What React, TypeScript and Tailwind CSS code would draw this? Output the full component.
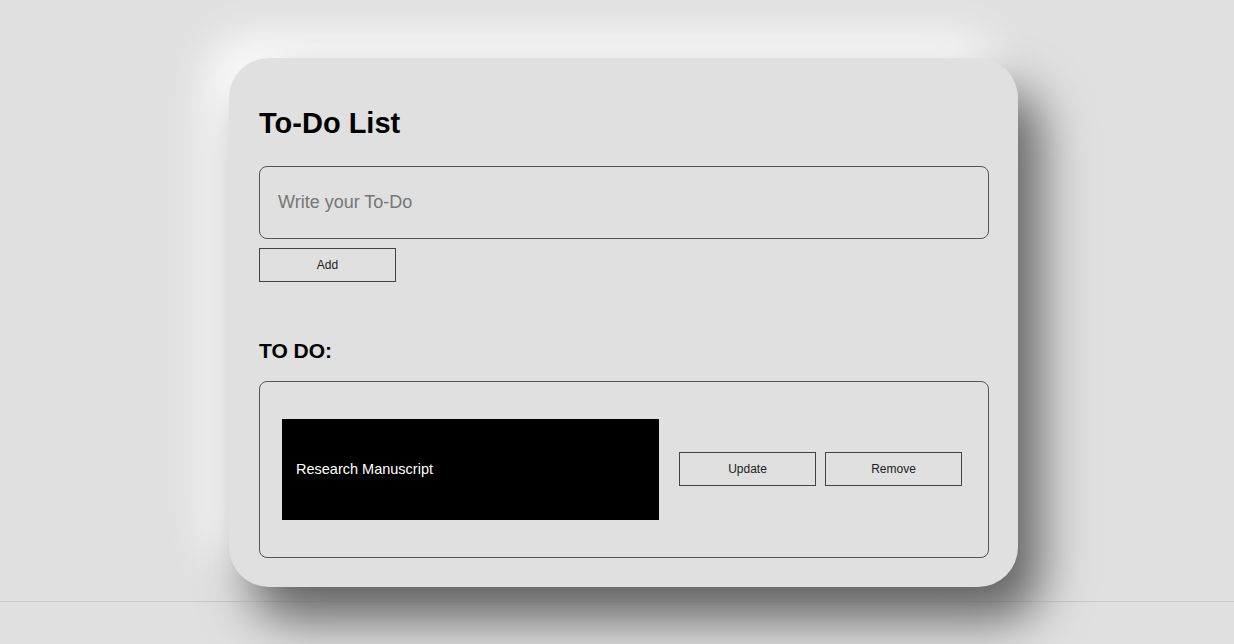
export default function App() {
  return (
    <div className="min-h-[644px] w-full overflow-hidden bg-[#e0e0e0] font-['Liberation_Sans',Arial,sans-serif]">
      <div className="h-[602px] border-b border-[#c9c9c9] pl-[229px] pt-[58px]">
        <div className="flex h-[529px] w-[789px] flex-col rounded-[40px] bg-[#e0e0e0] px-[30px] shadow-[22px_32px_50px_#626262,-20px_-20px_45px_#ffffff]">
          <h1 className="mt-[51px] text-[29px] font-bold leading-none text-black">To-Do List</h1>
          <input
            type="text"
            placeholder="Write your To-Do"
            className="mt-[28px] h-[73px] w-[730px] rounded-[8px] border border-[#555] bg-transparent px-[18px] text-[18px] text-black placeholder:text-[#767676] focus:outline-none"
          />
          <button className="mt-[9px] h-[34px] w-[137px] border border-[#444] bg-transparent text-[12px] text-[#222]">
            Add
          </button>
          <h2 className="mt-[58px] text-[21px] font-bold leading-none text-black">TO DO:</h2>
          <div className="mt-[20px] flex h-[177px] w-[730px] items-center rounded-[8px] border border-[#555] pl-[22px]">
            <div className="flex h-[101px] w-[377px] items-center bg-black pl-[14px] text-[14.5px] text-white">
              Research Manuscript
            </div>
            <div className="ml-[20px] flex gap-[9px]">
              <button className="h-[34px] w-[137px] -translate-y-px border border-[#444] bg-transparent text-[12px] text-[#222]">
                Update
              </button>
              <button className="h-[34px] w-[137px] -translate-y-px border border-[#444] bg-transparent text-[12px] text-[#222]">
                Remove
              </button>
            </div>
          </div>
        </div>
      </div>
    </div>
  )
}
